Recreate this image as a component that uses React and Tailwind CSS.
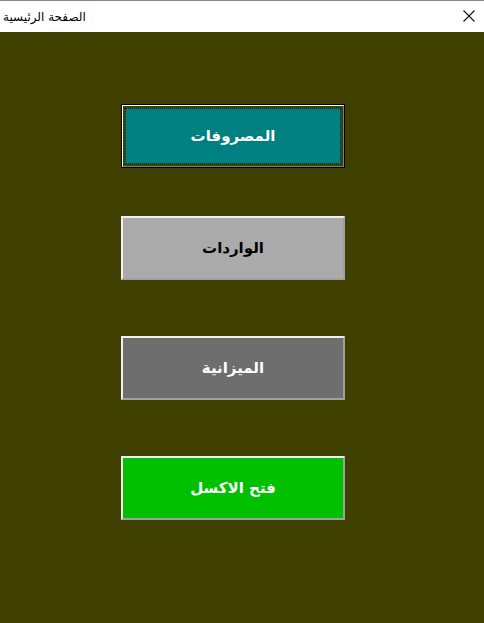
import React from "react";

const Btn = ({ label, bg, text, focused, className = "" }) => {
  if (focused) {
    return (
      <div className={`w-[224px] h-[64px] border border-black ${className}`}>
        <div className="w-full h-full border-t border-l border-white border-b border-r border-b-[#808080] border-r-[#808080] p-[2px]">
          <div
            dir="rtl"
            className={`w-full h-full flex items-center justify-center border border-dotted border-[#1a1a1a] ${bg} ${text} text-[15px] font-bold`}
          >
            {label}
          </div>
        </div>
      </div>
    );
  }
  return (
    <div
      dir="rtl"
      className={`w-[224px] h-[64px] flex items-center justify-center border-t-2 border-l-2 border-t-[#f0f0f0] border-l-[#f0f0f0] border-b-2 border-r-2 border-b-[#a0a0a0] border-r-[#a0a0a0] ${bg} ${text} text-[15px] font-bold ${className}`}
    >
      {label}
    </div>
  );
};

export default function App() {
  return (
    <div
      className="w-[484px] h-[623px] flex flex-col bg-[#3f3f00] overflow-hidden"
      style={{ fontFamily: '"DejaVu Sans", "Noto Sans", sans-serif' }}
    >
      <div className="h-[32px] shrink-0 bg-white border-t border-[#8a8a8a] flex items-center justify-between pl-[3px] pr-[9px]">
        <span className="text-[12px] text-black" dir="rtl">
          الصفحة الرئيسية
        </span>
        <svg width="12" height="12" viewBox="0 0 12 12" className="mt-[-2px]">
          <path d="M0.5 0.5 L11.5 11.5 M11.5 0.5 L0.5 11.5" stroke="#111" strokeWidth="1.1" fill="none" />
        </svg>
      </div>
      <div className="flex flex-col items-start pl-[121px] pt-[72px]">
        <Btn label="المصروفات" bg="bg-[#008080]" text="text-white" focused />
        <Btn label="الواردات" bg="bg-[#ababab]" text="text-black" className="mt-[48px]" />
        <Btn label="الميزانية" bg="bg-[#6e6e6e]" text="text-white" className="mt-[56px]" />
        <Btn label="فتح الاكسل" bg="bg-[#00c000]" text="text-white" className="mt-[56px]" />
      </div>
    </div>
  );
}
